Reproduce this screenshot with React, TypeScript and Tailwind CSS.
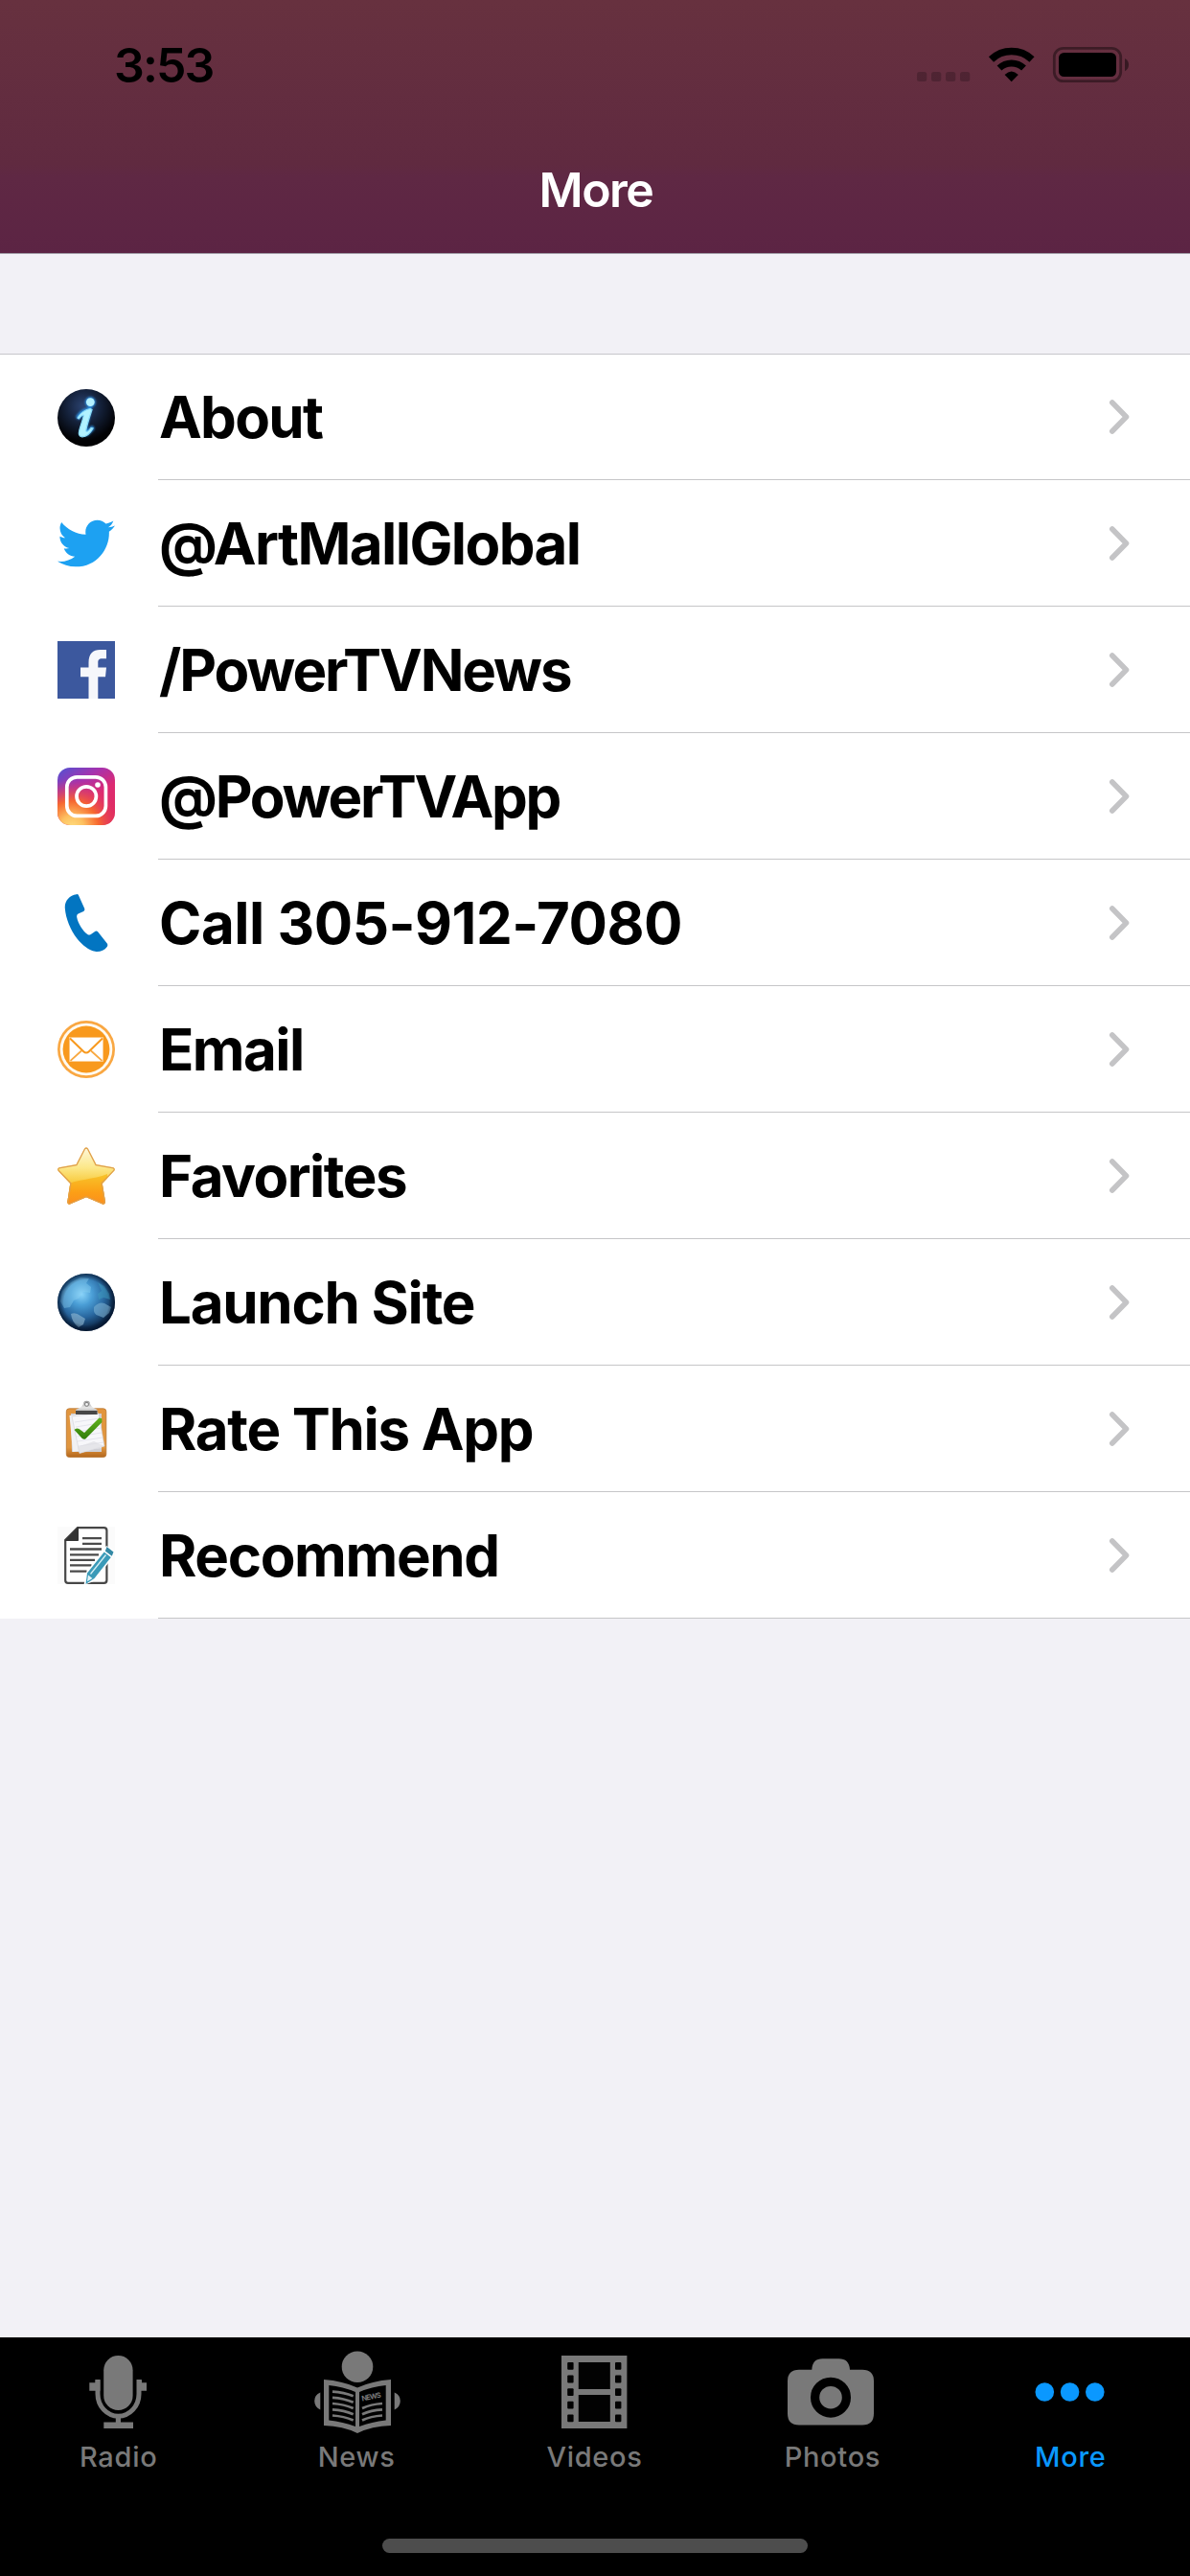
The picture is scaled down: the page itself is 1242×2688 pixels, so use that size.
import type { ReactNode } from 'react';
import { FaTwitter } from 'react-icons/fa';

function InfoIcon() {
    return (
        <svg viewBox="0 0 60 60" className="w-[60px] h-[60px]">
            <defs>
                <radialGradient id="infoBg" cx="0.45" cy="0.3" r="0.6">
                    <stop offset="0" stopColor="#2b4371" />
                    <stop offset="0.5" stopColor="#14213a" />
                    <stop offset="1" stopColor="#020204" />
                </radialGradient>
                <filter id="infoGlow" x="-50%" y="-50%" width="200%" height="200%">
                    <feGaussianBlur stdDeviation="1.1" />
                </filter>
            </defs>
            <circle cx="30" cy="30" r="30" fill="url(#infoBg)" />
            <g filter="url(#infoGlow)" fill="#2f8fe0" stroke="#2f8fe0" strokeWidth="3" strokeLinecap="round">
                <circle cx="34.3" cy="13.6" r="4" />
                <path d="M22 29 Q26 23 33 21.5 L28 43 Q27 48 31 46 L36 41" fill="none" strokeWidth="5" />
            </g>
            <circle cx="34.3" cy="13.6" r="4.4" fill="#b5f1ff" />
            <path
                d="M21 30 C24 25 29 21.5 34 20.5 L36 21.5 C33.5 29 30.5 38 29.8 43 C29.6 45.6 32 44.5 35 40.5 L37 41 C34 46.5 29.5 50 25.5 49.8 C22 49.5 22 46.5 22.8 43 C24 38 26.5 32 27.3 27.5 C27 26.5 25 27.5 22.3 31 Z"
                fill="#b2f2ff"
                stroke="#8adcfa"
                strokeWidth="1.2"
            />
        </svg>
    );
}

function FacebookIcon() {
    return (
        <svg viewBox="0 0 60 60" className="w-[60px] h-[60px]">
            <rect width="60" height="60" fill="#3c589e" />
            <path
                d="M32.5 60 V37.3 H24 V27.5 H32.5 V22.5 C32.5 13 37 9 44.5 9 H51 V18.3 H46.5 C43 18.3 42.3 20 42.3 22.8 V27.5 H51 L50 37.3 H42.3 V60 Z"
                fill="#f6f7fb"
            />
        </svg>
    );
}

function InstagramIcon() {
    return (
        <svg viewBox="0 0 60 60" className="w-[60px] h-[60px]">
            <defs>
                <linearGradient id="igBase" x1="0.1" y1="0" x2="0.75" y2="1">
                    <stop offset="0" stopColor="#5a4fcf" />
                    <stop offset="0.3" stopColor="#a632ae" />
                    <stop offset="0.6" stopColor="#dd2a72" />
                    <stop offset="1" stopColor="#e02c5e" />
                </linearGradient>
                <radialGradient id="igWarm" cx="0.25" cy="1.05" r="0.85">
                    <stop offset="0" stopColor="#ffde80" />
                    <stop offset="0.25" stopColor="#fdc060" />
                    <stop offset="0.55" stopColor="#f86b2c" stopOpacity="0.95" />
                    <stop offset="1" stopColor="#e0306a" stopOpacity="0" />
                </radialGradient>
            </defs>
            <rect width="60" height="60" rx="13" fill="url(#igBase)" />
            <rect width="60" height="60" rx="13" fill="url(#igWarm)" />
            <rect x="9.8" y="9.8" width="40.6" height="40.6" rx="10.5" fill="none" stroke="#fff" strokeWidth="3.7" />
            <circle cx="30.2" cy="30" r="10.2" fill="none" stroke="#fff" strokeWidth="3.7" />
            <circle cx="42" cy="18" r="2.8" fill="#fff" />
        </svg>
    );
}

function PhoneIcon() {
    return (
        <svg viewBox="0 0 60 60" className="w-[60px] h-[60px]">
            <path
                d="M19.8 0.2 Q21.3 -0.3 22 1.2 L28.2 15 Q28.8 17 27.2 18 L21.6 20.4 Q19.8 21.4 20.2 24 C21.5 31 26.5 38.5 31.3 42 Q33 43.2 34.8 42 L39.5 38.8 Q41 38 42.3 39.4 L51.8 51.6 Q52.9 53.2 51.7 54.9 C49 58.8 43.5 60.6 39.3 59.8 C33 58.6 26 53.5 20.5 46.5 C13.5 37.5 8.6 25.5 7.8 14.5 C7.3 7 12.5 1.2 19.8 0.2 Z"
                fill="#0275c1"
            />
        </svg>
    );
}

function EmailIcon() {
    return (
        <svg viewBox="0 0 60 60" className="w-[60px] h-[60px]">
            <circle cx="30" cy="30" r="30" fill="#f9a742" />
            <circle cx="30" cy="30" r="27.3" fill="#fffaf0" />
            <circle cx="30" cy="30" r="24.4" fill="#f8991d" />
            <rect x="12.6" y="17.6" width="35" height="25" fill="#fff" stroke="#fccb8b" strokeWidth="0.6" />
            <path d="M13 18.5 L27.2 32.2 Q30 34.8 32.8 32.2 L47 18.5" fill="none" stroke="#f8991d" strokeWidth="2" />
            <path d="M13.5 41.8 L25 31.5 M46.5 41.8 L35 31.5" stroke="#f8a840" strokeWidth="1.8" />
        </svg>
    );
}

function StarIcon() {
    const star =
        'M28 1.5 Q30 -0.8 32 1.5 L40.5 18 L58.5 21.2 Q61 22.8 59 25 L46.8 38 L50 57 Q49.8 60.2 47 59.6 L30 52.3 L13 59.6 Q10.2 60.2 10.3 57 L13.2 38 L0.8 25 Q-1 22.8 1.5 21.2 L19.5 18 Z';
    return (
        <svg viewBox="0 0 60 60" className="w-[60px] h-[60px]">
            <defs>
                <linearGradient id="starTop" x1="0" y1="0" x2="0" y2="1">
                    <stop offset="0" stopColor="#fef8dc" />
                    <stop offset="0.35" stopColor="#fce88a" />
                    <stop offset="0.65" stopColor="#f8c735" />
                    <stop offset="1" stopColor="#f2a51f" />
                </linearGradient>
                <linearGradient id="starBottom" x1="0" y1="0" x2="0" y2="1">
                    <stop offset="0" stopColor="#f8c42a" />
                    <stop offset="0.6" stopColor="#fc9f16" />
                    <stop offset="1" stopColor="#fb8e1e" />
                </linearGradient>
                <clipPath id="starClip">
                    <path d={star} />
                </clipPath>
            </defs>
            <path d={star} fill="url(#starTop)" />
            <g clipPath="url(#starClip)">
                <path d="M8 40 C20 33 38 34 52 28 V60 H8 Z" fill="url(#starBottom)" />
                <path d={star} fill="none" stroke="#e0a04c" strokeWidth="2.6" />
            </g>
        </svg>
    );
}

function GlobeIcon() {
    return (
        <svg viewBox="0 0 60 60" className="w-[60px] h-[60px]">
            <defs>
                <radialGradient id="globeSea" cx="0.42" cy="0.36" r="0.62">
                    <stop offset="0" stopColor="#8ad4fa" />
                    <stop offset="0.3" stopColor="#4a9ed6" />
                    <stop offset="0.65" stopColor="#28669e" />
                    <stop offset="1" stopColor="#0a2342" />
                </radialGradient>
                <radialGradient id="globeShade" cx="0.5" cy="0.5" r="0.5">
                    <stop offset="0.78" stopColor="#03132a" stopOpacity="0" />
                    <stop offset="1" stopColor="#03132a" stopOpacity="0.7" />
                </radialGradient>
            </defs>
            <circle cx="30" cy="30" r="30" fill="url(#globeSea)" />
            <path d="M5 18 L14 9 L24 4 L33 5 L30 10 L35 14 L34 20 L27 19 L22 26 L17 28 L13 35 L7 36 L3 29 Z" fill="#8fd3f3" opacity="0.4" />
            <path d="M14 42 Q19 40 24 44 L29 47 L27 53 L22 56 Q15 51 14 42 Z" fill="#92bad4" opacity="0.6" />
            <path d="M38 35 Q43 29 49 31 L56 35 L54 41 L48 46 L43 44 Q37 43 38 35 Z" fill="#7bb0d2" opacity="0.6" />
            <path d="M42 9 L49 13 L54 21 L55 27 L48 25 L43 27 L42 21 L46 18 Z" fill="#3f9dc0" opacity="0.5" />
            <circle cx="30" cy="30" r="30" fill="url(#globeShade)" />
        </svg>
    );
}

function ClipboardIcon() {
    return (
        <svg viewBox="0 0 60 60" className="w-[60px] h-[60px]">
            <defs>
                <linearGradient id="board" x1="0" y1="0" x2="0" y2="1">
                    <stop offset="0" stopColor="#e2953d" />
                    <stop offset="0.8" stopColor="#e0963f" />
                    <stop offset="1" stopColor="#b3661c" />
                </linearGradient>
                <linearGradient id="clip" x1="0" y1="0" x2="0" y2="1">
                    <stop offset="0" stopColor="#9a9a9a" />
                    <stop offset="0.5" stopColor="#e8e8e8" />
                    <stop offset="1" stopColor="#8a8a8a" />
                </linearGradient>
                <linearGradient id="check" x1="0" y1="0" x2="0" y2="1">
                    <stop offset="0" stopColor="#61b21d" />
                    <stop offset="1" stopColor="#317d0a" />
                </linearGradient>
            </defs>
            <rect x="9.3" y="8.8" width="41.5" height="50.7" rx="3" fill="url(#board)" stroke="#b87530" strokeWidth="0.8" />
            <path d="M14 14 H46 V54 H15 Z" fill="#cfcfd4" />
            <path d="M12.5 16 L42 12 L46 50 L16 54 Z" fill="#f1f1f4" />
            <path d="M15 17 L43 14 L49 48 L23 55.5 Z" fill="#f7f7fa" stroke="#d0d0d6" strokeWidth="0.6" />
            <path d="M18 23 L44 19 M19 28 L44 24 M19.5 33 L45 29 M20.5 38 L46 34 M21 43 L47 39 M22 48 L48 44" stroke="#dddde6" strokeWidth="0.7" />
            <path d="M38 43 L49 48 L23 55.5 L21 49 Z" fill="#dedee3" opacity="0.7" />
            <path d="M19 10 L25 7 L27 4 Q27 0.8 30.5 0.8 T34 4 L36 7 L41.5 10 V15 H19 Z" fill="url(#clip)" />
            <rect x="28.7" y="2.6" width="3.6" height="3.6" rx="1.2" fill="#fafafa" stroke="#6a6a6a" strokeWidth="0.9" />
            <rect x="19" y="11" width="22.5" height="4" fill="#474747" />
            <path d="M17.5 31 Q19.5 28.5 22.5 30 L28 34 L43.5 18.5 L46.3 19.3 L46.5 23 L29.5 40.3 Q27.5 41.5 25.8 40 Z" fill="url(#check)" />
        </svg>
    );
}

function RecommendIcon() {
    return (
        <svg viewBox="0 0 60 60" className="w-[60px] h-[60px]">
            <rect width="60" height="60" fill="#fbfbfb" />
            <path d="M21 1.1 H48.5 Q51.4 1.1 51.4 4 V56 Q51.4 58.9 48.5 58.9 H11 Q8.2 58.9 8.2 56 V14 Z" fill="#fff" stroke="#474747" strokeWidth="2.2" />
            <path d="M21.5 0.8 V14.5 H8.2 Z" fill="#333" stroke="#333" strokeWidth="1" />
            <path d="M26 12.2 H46 M26 17.8 H46 M13 23.5 H46 M13 29.3 H43 M13 34.8 H39 M13 40.4 H35.5 M13 46.6 H30.5" stroke="#4b4b4b" strokeWidth="2.3" />
            <path d="M51 20 L59.8 25.5 L58 31.5 L39 56.5 L27.5 61 L30 48 Z" fill="#fff" />
            <path d="M51.5 21 L58.5 26.5 L56.8 30.8 L49.8 25.5 Z" fill="#3389a5" />
            <path d="M48.7 26.5 L55.8 32 L38.5 54 L29.5 60 L31 48.5 Z" fill="#3a9ab8" />
            <path d="M50.5 29.5 L34.5 49.5" stroke="#d6eff5" strokeWidth="1.3" />
            <path d="M32 50.5 L36.5 54 L31 57.3 Z" fill="#e3f4f8" />
        </svg>
    );
}

function RadioIcon() {
    return (
        <svg viewBox="93 2453 61 90" className="w-[61px] h-[90px] relative -left-px">
            <rect x="108.2" y="2458" width="30.4" height="57" rx="15.2" fill="#797979" />
            <path d="M102 2483 V2498 A21.3 23 0 0 0 145 2498 V2483" fill="none" stroke="#797979" strokeWidth="5" />
            <path d="M93.3 2486.3 H99.5 V2483.3 H104.5 V2494.7 H93.3 Z M153 2486.3 H148 V2483.3 H143 V2494.7 H153 Z M120.8 2520 H126 V2527.5 H139 V2534 H108.3 V2527.5 H120.8 Z" fill="#797979" />
        </svg>
    );
}

function NewsIcon() {
    return (
        <svg viewBox="328 2453 90 90" className="w-[90px] h-[90px]">
            <g fill="#797979">
                <circle cx="373" cy="2469.7" r="16.3" />
                <path d="M334.3 2496.5 Q328.2 2499 328.2 2505.3 T334.3 2514.5 Z M411.7 2496.5 Q417.8 2499 417.8 2505.3 T411.7 2514.5 Z" />
                <path
                    fillRule="evenodd"
                    d="M338 2483 Q358 2484.5 373 2491.5 Q388 2484.5 408 2483 V2531 Q388 2531.5 373 2539 Q358 2531.5 338 2531 Z M343.3 2489 V2525.5 Q358 2527 371 2532 V2496 Q358 2490.5 343.3 2489 Z M402.7 2489 V2525.5 Q388 2527 375 2532 V2496 Q388 2490.5 402.7 2489 Z"
                />
            </g>
            <g fill="none" stroke="#797979" strokeWidth="2.7">
                <path d="M347 2495.7 Q359 2496.5 368.7 2500.3 M347 2501.8 Q359 2502.6 368.7 2506.8 M347 2508 Q359 2508.8 368.7 2513 M347 2514.3 Q359 2515 368.7 2519.2 M347 2520.5 Q359 2521.3 368.7 2525.5" />
                <path d="M399 2508 Q387 2508.8 378 2513 M399 2514.3 Q387 2515 378 2519.2 M399 2520.5 Q387 2521.3 378 2525.5" />
            </g>
            <text x="378" y="2505.5" transform="rotate(-11 378 2505.5)" textLength="20.5" className="font-[Inter,sans-serif] text-[7.5px] font-bold fill-[#797979]">
                NEWS
            </text>
        </svg>
    );
}

function VideosIcon() {
    const holes = [2465, 2478.6, 2492.3, 2505.8, 2519.5];
    return (
        <svg viewBox="586 2453 69 90" className="w-[69px] h-[90px] relative -left-px">
            <rect x="586" y="2458" width="68.4" height="76" fill="#797979" />
            <rect x="603.8" y="2465" width="33" height="28" fill="#020202" />
            <rect x="603.8" y="2499" width="33" height="28" fill="#020202" />
            {holes.map((y) => (
                <g key={y} fill="#020202">
                    <rect x="592.2" y={y} width="6.4" height="7.8" rx="1" />
                    <rect x="642" y={y} width="6.4" height="7.8" rx="1" />
                </g>
            ))}
        </svg>
    );
}

function PhotosIcon() {
    return (
        <svg viewBox="822 2453 90 90" className="w-[90px] h-[90px] relative -left-[2px]">
            <path
                d="M834 2472.7 H847.3 Q847.8 2461.3 858.5 2461.3 H875.5 Q886.3 2461.3 887 2472.7 H900 Q912 2472.7 912 2484.7 V2518.5 Q912 2530.5 900 2530.5 H834 Q822 2530.5 822 2518.5 V2484.7 Q822 2472.7 834 2472.7 Z"
                fill="#797979"
            />
            <circle cx="867" cy="2501.7" r="16.4" fill="#797979" stroke="#000" strokeWidth="9.2" />
        </svg>
    );
}

function MoreIcon() {
    return (
        <svg viewBox="1080 2453 73 90" className="w-[73px] h-[90px] relative -left-px">
            <circle cx="1090.3" cy="2496" r="9.8" fill="#0a98ff" />
            <circle cx="1116.6" cy="2496" r="9.8" fill="#0a98ff" />
            <circle cx="1142.8" cy="2496" r="9.8" fill="#0a98ff" />
        </svg>
    );
}

interface MenuItem {
    label: string;
    icon: ReactNode;
    tracking: string;
}

const menu: MenuItem[] = [
    { label: 'About', icon: <InfoIcon />, tracking: 'tracking-[-1.7px]' },
    { label: '@ArtMallGlobal', icon: <FaTwitter size={60} color="#1da1f2" />, tracking: 'tracking-[-1.6px]' },
    { label: '/PowerTVNews', icon: <FacebookIcon />, tracking: 'tracking-[-2.1px]' },
    { label: '@PowerTVApp', icon: <InstagramIcon />, tracking: 'tracking-[-2.25px]' },
    { label: 'Call 305-912-7080', icon: <PhoneIcon />, tracking: 'tracking-[-0.5px]' },
    { label: 'Email', icon: <EmailIcon />, tracking: 'tracking-[-1.6px]' },
    { label: 'Favorites', icon: <StarIcon />, tracking: 'tracking-[-1.5px]' },
    { label: 'Launch Site', icon: <GlobeIcon />, tracking: 'tracking-[-1.25px]' },
    { label: 'Rate This App', icon: <ClipboardIcon />, tracking: 'tracking-[-1.3px]' },
    { label: 'Recommend', icon: <RecommendIcon />, tracking: 'tracking-[-1.35px]' },
];

const tabs = [
    { label: 'Radio', icon: <RadioIcon /> },
    { label: 'News', icon: <NewsIcon /> },
    { label: 'Videos', icon: <VideosIcon /> },
    { label: 'Photos', icon: <PhotosIcon /> },
    { label: 'More', icon: <MoreIcon />, active: true },
];

function StatusBar() {
    return (
        <div className="flex h-[132px] items-start justify-between pl-[119px] pr-16 pt-[37px]">
            <div className="text-[50px] font-semibold leading-[62px] tracking-[-1.9px] text-black">3:53</div>
            <svg viewBox="956 37 222 62" className="h-[62px] w-[222px]">
                <g fill="#000" opacity="0.2">
                    <rect x="957" y="75" width="10.3" height="10" rx="2.5" />
                    <rect x="972" y="75" width="10.3" height="10" rx="2.5" />
                    <rect x="987" y="75" width="10.3" height="10" rx="2.5" />
                    <rect x="1002" y="75" width="10.3" height="10" rx="2.5" />
                </g>
                <path d="M1034.5 62 A31 31 0 0 1 1077 62" fill="none" stroke="#000" strokeWidth="7.5" />
                <path d="M1043 71 A18.5 18.5 0 0 1 1068.5 71" fill="none" stroke="#000" strokeWidth="7" />
                <path d="M1048.6 78 Q1055.7 71 1062.8 78 L1055.7 85.3 Z" fill="#000" />
                <rect x="1100.3" y="50.3" width="69.4" height="34.4" rx="9.5" fill="none" stroke="#000" strokeOpacity="0.4" strokeWidth="2.8" />
                <rect x="1105" y="55" width="60" height="25" rx="5.5" fill="#000" />
                <path d="M1174 61 Q1178 63 1178 67.5 T1174 74.3 Z" fill="#000" fillOpacity="0.45" />
            </svg>
        </div>
    );
}

export default function App() {
    return (
        <div className="flex h-[2688px] w-[1242px] flex-col overflow-hidden bg-[#f2f1f6] font-[Inter,'Liberation_Sans',sans-serif]">
            <header className="h-[265px] shrink-0 border-b border-[#a09ba5] bg-[linear-gradient(180deg,#67313f_0%,#602a40_65%,#5f2844_70%,#5c2444_100%)]">
                <StatusBar />
                <h1 className="pl-0.5 text-center text-[50px] font-semibold leading-[132px] tracking-[-1.5px] text-white">More</h1>
            </header>

            <ul className="mt-[104px] border-t border-[#c7c6cb] bg-white">
                {menu.map((item, i) => (
                    <li key={item.label} className={`flex items-center pl-[60px] ${i === 0 ? 'h-[131px]' : 'h-[132px]'}`}>
                        <div className="flex h-[60px] w-[60px] shrink-0 items-center justify-center">{item.icon}</div>
                        <div className="ml-[45px] flex h-full flex-1 items-center justify-between border-b border-[#c6c6c8] pl-px pr-[62px]">
                            <span className={`text-[60px] font-bold leading-[72px] text-black ${item.tracking}`}>{item.label}</span>
                            <svg viewBox="0 0 23 38" className="h-[38px] w-[23px]">
                                <path d="M3.8 4 L18.5 19 L3.8 34" fill="none" stroke="#c4c4c6" strokeWidth="5.6" strokeLinecap="round" strokeLinejoin="round" />
                            </svg>
                        </div>
                    </li>
                ))}
            </ul>

            <nav className="mt-auto flex h-[249px] shrink-0 flex-col bg-black">
                <div className="flex pt-[14px]">
                    {tabs.map((tab) => (
                        <div key={tab.label} className="flex flex-1 flex-col items-center">
                            {tab.icon}
                            <span className={`pr-px text-[29px] font-medium leading-[41px] tracking-[0.7px] ${tab.active ? 'text-[#0a98ff]' : 'text-[#797979]'}`}>
                                {tab.label}
                            </span>
                        </div>
                    ))}
                </div>
                <div className="mx-auto mb-6 mt-auto h-[15px] w-[444px] rounded-full bg-[#4d4d4d]" />
            </nav>
        </div>
    );
}
